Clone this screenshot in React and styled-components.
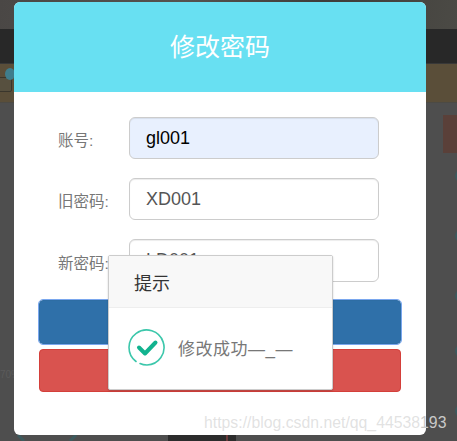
import styled, {createGlobalStyle} from "styled-components"

const GlobalStyle = createGlobalStyle`
  html, body {
    margin: 0;
    padding: 0;
    background: #4e4e4e;
  }
  body {
    font-family: "Liberation Sans", "Noto Sans CJK SC", sans-serif;
  }
`

// Dimmed page behind the dialog
const Page = styled.div`
  position: relative;
  width: 457px;
  height: 441px;
  overflow: hidden;
  display: flex;
  flex-direction: column;
`

const TopStrip = styled.div`
  height: 29px;
  background: linear-gradient(100deg, #4a4745, #56534f 40%, #3f3d3a 70%, #4b4a45);
`

const NavBar = styled.div`
  height: 34px;
  background: #282828;
  border-bottom: 1px solid #383838;
`

const Banner = styled.div`
  height: 38px;
  background: #5a4e39;
  border-bottom: 1px solid #4c4a44;
`

const PageBody = styled.div`
  flex: 1;
  background: #4e4e4e;
`

const Badge = styled.div`
  position: absolute;
  left: 5px;
  top: 68px;
  width: 10px;
  height: 12px;
  border-radius: 50%;
  background: #3f7d8c;
`

const BannerIcon = styled.div`
  position: absolute;
  left: -4px;
  top: 77px;
  width: 14px;
  height: 13px;
  border: 1px solid #3a362c;
  border-radius: 2px;
  background: #57503f;
`

const BackCard = styled.div`
  position: absolute;
  left: 443px;
  top: 115px;
  width: 14px;
  height: 38px;
  background: #5a4039;
`

const SideDot = styled.div`
  position: absolute;
  left: 455px;
  top: ${(p) => p.$top}px;
  width: 10px;
  height: 12px;
  border-radius: 50%;
  background: #3d5a5e;
`

const Percent = styled.span`
  position: absolute;
  left: 0;
  top: 369px;
  font-size: 10px;
  color: #5b5b5b;
`

const BottomBlock = styled.div`
  position: absolute;
  left: 168px;
  top: 435px;
  width: 68px;
  height: 6px;
  background: #2c2c2c;
`

const BottomStripe = styled.div`
  position: absolute;
  left: 226px;
  top: 435px;
  width: 2px;
  height: 6px;
  background: #6b3a3a;
`

const BottomArc = styled.svg`
  position: absolute;
  left: 16px;
  top: 435px;
`

// Password dialog
const Modal = styled.div`
  position: absolute;
  left: 14px;
  top: 2px;
  width: 412px;
  height: 433px;
  background: #fff;
  border-radius: 6px;
  overflow: hidden;
`

const ModalHeader = styled.div`
  height: 90px;
  display: flex;
  align-items: center;
  justify-content: center;
  background: #68e0f2;
  color: #fff;
  font-size: 25px;
  padding: 0 0 4px 0;
  box-sizing: border-box;
`

const ModalBody = styled.form`
  display: flex;
  flex-direction: column;
  padding: 25px 25px 0;
`

const FormRow = styled.div`
  display: flex;
  align-items: center;
  height: ${(p) => p.$height || 42}px;
  margin-bottom: ${(p) => p.$gap || 19}px;
  padding-left: 19px;
`

const FieldLabel = styled.label`
  width: 71px;
  flex: none;
  padding-top: 2px;
  font-size: 15.5px;
  color: #777;
  white-space: nowrap;
`

const TextInput = styled.input`
  width: 250px;
  height: 100%;
  box-sizing: border-box;
  padding: 0 16px;
  border: 1px solid #ccc;
  border-radius: 6px;
  font-family: inherit;
  font-size: 18px;
  color: ${(p) => (p.$filled ? "#000" : "#555")};
  background: ${(p) => (p.$filled ? "#e8f0fe" : "#fff")};
  box-shadow: inset 0 1px 1px rgba(0, 0, 0, 0.075);
  outline: none;
`

const ActionButton = styled.button`
  display: block;
  width: 100%;
  box-sizing: border-box;
  height: ${(p) => p.$height}px;
  margin-bottom: 5px;
  border-radius: 4px;
  border: 1px solid ${(p) => (p.$danger ? "#d43f3a" : "#2e6da4")};
  background: ${(p) => (p.$danger ? "#d9534f" : "#2f70a9")};
  ${(p) => p.$focused && "outline: 1px solid #7aa7ee; outline-offset: 0;"}
`

// Toast over the dialog
const Toast = styled.div`
  position: absolute;
  left: 108px;
  top: 255px;
  width: 225px;
  height: 135px;
  box-sizing: border-box;
  background: #fff;
  border: 1px solid #ccc;
  border-radius: 2px;
  box-shadow: 0 1px 2px rgba(0, 0, 0, 0.2);
`

const ToastHeader = styled.div`
  height: 52px;
  box-sizing: border-box;
  display: flex;
  align-items: center;
  padding-left: 25px;
  background: #f8f8f8;
  border-bottom: 1px solid #eee;
  font-size: 18px;
  color: #333;
`

const ToastBody = styled.div`
  display: flex;
  align-items: center;
  gap: 12px;
  padding: 20px 0 0 19px;
  font-size: 17px;
  letter-spacing: 0.5px;
  color: #777;
  white-space: nowrap;
`

const Watermark = styled.span`
  position: absolute;
  left: 204px;
  top: 414px;
  font-size: 15.8px;
  color: rgba(190, 190, 190, 0.45);
  white-space: nowrap;
`

const WatermarkEnd = styled.span`
  color: #c9c9c9;
`

const SuccessIcon = () => (
  <svg width="38" height="39" viewBox="0 0 38 39" fill="none">
    <path
      d="M8 33.500A17.500 17.500 0 1 1 19 37c-2.500 0-5-.5-7-1.500"
      stroke="#3cc7ab"
      strokeWidth="1.600"
      strokeLinecap="round"
    />
    <path
      d="M11 19.500l6 6 10.500-11"
      stroke="#12b38f"
      strokeWidth="4"
      strokeLinecap="round"
      strokeLinejoin="round"
    />
  </svg>
)

const App = () => {
  return (
    <Page>
      <GlobalStyle />
      <TopStrip />
      <NavBar />
      <Banner />
      <PageBody />
      <BannerIcon />
      <Badge />
      <BackCard />
      {[170, 230, 290, 345, 405].map((top) => (
        <SideDot key={top} $top={top} />
      ))}
      <Percent>70%</Percent>
      <BottomBlock />
      <BottomStripe />
      <BottomArc width="62" height="6" viewBox="0 0 62 6" fill="none">
        <path d="M2 0l6 6M60 0l-6 6" stroke="#3d5a5e" strokeWidth="3" />
      </BottomArc>
      <Modal>
        <ModalHeader>修改密码</ModalHeader>
        <ModalBody>
          <FormRow>
            <FieldLabel>账号:</FieldLabel>
            <TextInput $filled defaultValue="gl001" />
          </FormRow>
          <FormRow>
            <FieldLabel>旧密码:</FieldLabel>
            <TextInput defaultValue="XD001" />
          </FormRow>
          <FormRow $height={43} $gap={18}>
            <FieldLabel>新密码:</FieldLabel>
            <TextInput defaultValue="LD001" />
          </FormRow>
          <ActionButton type="button" $height={44} $focused />
          <ActionButton type="button" $height={43} $danger />
        </ModalBody>
      </Modal>
      <Toast>
        <ToastHeader>提示</ToastHeader>
        <ToastBody>
          <SuccessIcon />
          修改成功—_—
        </ToastBody>
      </Toast>
      <Watermark>
        https://blog.csdn.net/qq_44538<WatermarkEnd>193</WatermarkEnd>
      </Watermark>
    </Page>
  )
}

export default App
